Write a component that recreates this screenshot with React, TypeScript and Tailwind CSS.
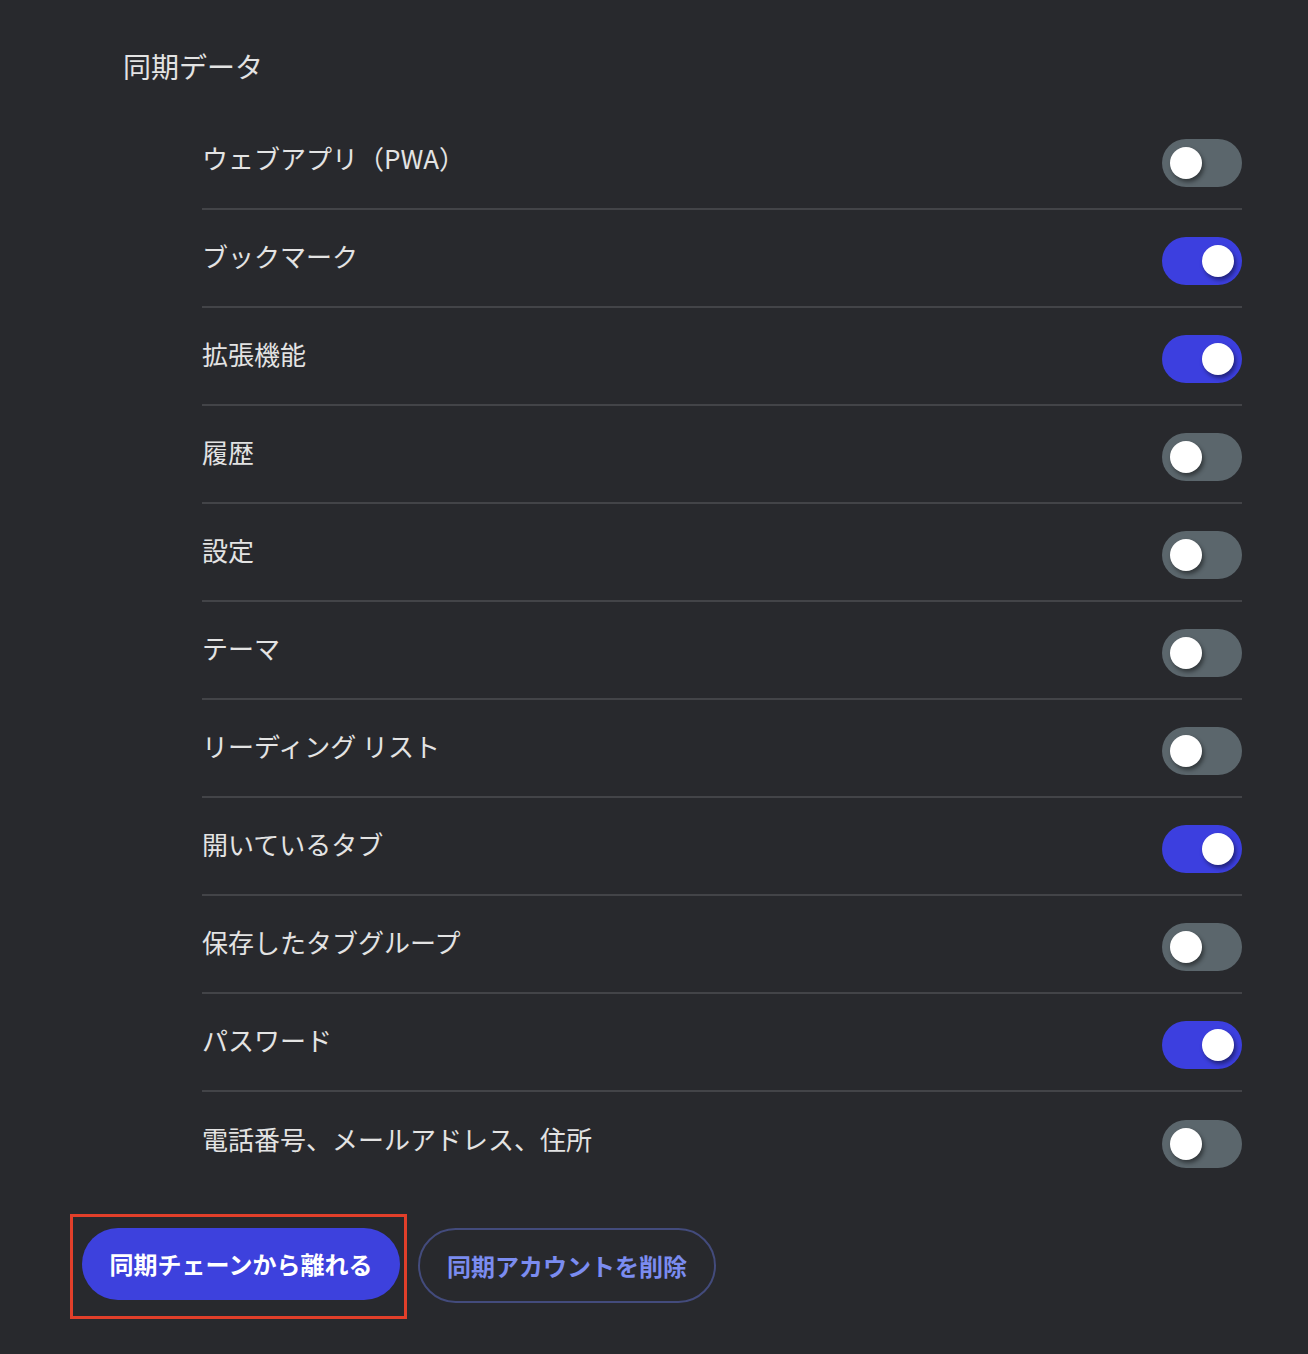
const rows: { label: string; on: boolean }[] = [
  { label: "ウェブアプリ（PWA）", on: false },
  { label: "ブックマーク", on: true },
  { label: "拡張機能", on: true },
  { label: "履歴", on: false },
  { label: "設定", on: false },
  { label: "テーマ", on: false },
  { label: "リーディング リスト", on: false },
  { label: "開いているタブ", on: true },
  { label: "保存したタブグループ", on: false },
  { label: "パスワード", on: true },
  { label: "電話番号、メールアドレス、住所", on: false },
];

function Toggle({ on }: { on: boolean }) {
  return (
    <div
      className={
        "relative mt-[6px] h-[48px] w-[80px] shrink-0 rounded-full " +
        (on ? "bg-[#3c3fdf]" : "bg-[#5b666c]")
      }
    >
      <div
        className={
          "absolute top-[8px] h-[32px] w-[32px] rounded-full bg-white shadow-[2px_3px_4px_rgba(0,0,0,0.45)] " +
          (on ? "right-[8px]" : "left-[8px]")
        }
      />
    </div>
  );
}

export default function App() {
  return (
    <div
      className="min-h-[1354px] w-full bg-[#28292d] text-[#e3e3e3]"
      style={{ fontFamily: '"Noto Sans CJK JP", "Noto Sans", sans-serif' }}
    >
      <h2 className="pl-[123px] pt-[48px] text-[28px] leading-[36px] font-normal">
        同期データ
      </h2>

      <div className="ml-[202px] mr-[66px] mt-[28px]">
        {rows.map((r, i) => (
          <div
            key={r.label}
            className={
              "flex h-[98px] items-center justify-between " +
              (i < rows.length - 1 ? "border-b-2 border-[#434448]" : "")
            }
          >
            <span className="pb-1 text-[26px] leading-none">{r.label}</span>
            <Toggle on={r.on} />
          </div>
        ))}
      </div>

      <div className="mt-[24px] ml-[70px] flex items-start">
        <div className="border-[3px] border-[#e23f2a] pl-[9px] pr-[4px] pt-[11px] pb-[16px]">
          <button className="h-[72px] w-[318px] rounded-full bg-[#3d41dd] text-[24px] font-bold text-white">
            同期チェーンから離れる
          </button>
        </div>
        <button className="ml-[11px] mt-[14px] h-[75px] w-[298px] rounded-full border-2 border-[#434b7c] text-[24px] font-bold text-[#7b8cf0]">
          同期アカウントを削除
        </button>
      </div>
    </div>
  );
}
